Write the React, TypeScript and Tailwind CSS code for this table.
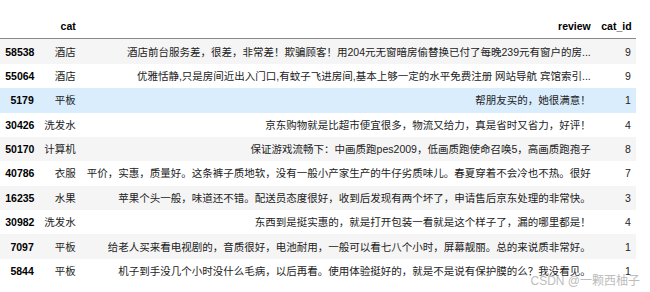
type Row = {
  idx: number;
  cat: string;
  review: string;
  catId: number;
};

const rows: Row[] = [
  { idx: 58538, cat: "酒店", review: "酒店前台服务差，很差，非常差！欺骗顾客！用204元无窗暗房偷替换已付了每晚239元有窗户的房...", catId: 9 },
  { idx: 55064, cat: "酒店", review: "优雅恬静,只是房间近出入门口,有蚊子飞进房间,基本上够一定的水平免费注册 网站导航 宾馆索引...", catId: 9 },
  { idx: 5179, cat: "平板", review: "帮朋友买的，她很满意！", catId: 1 },
  { idx: 30426, cat: "洗发水", review: "京东购物就是比超市便宜很多，物流又给力，真是省时又省力，好评！", catId: 4 },
  { idx: 50170, cat: "计算机", review: "保证游戏流畅下：中画质跑pes2009，低画质跑使命召唤5，高画质跑孢子", catId: 8 },
  { idx: 40786, cat: "衣服", review: "平价，实惠，质量好。这条裤子质地软，没有一般小产家生产的牛仔劣质味儿。春夏穿着不会冷也不热。很好", catId: 7 },
  { idx: 16235, cat: "水果", review: "苹果个头一般，味道还不错。配送员态度很好，收到后发现有两个坏了，申请售后京东处理的非常快。", catId: 3 },
  { idx: 30982, cat: "洗发水", review: "东西到是挺实惠的，就是打开包装一看就是这个样子了，漏的哪里都是！", catId: 4 },
  { idx: 7097, cat: "平板", review: "给老人买来看电视剧的，音质很好，电池耐用，一般可以看七八个小时，屏幕靓丽。总的来说质非常好。", catId: 1 },
  { idx: 5844, cat: "平板", review: "机子到手没几个小时没什么毛病，以后再看。使用体验挺好的，就是不是说有保护膜的么？我没看见。", catId: 1 },
];

const cell = "px-[5.25px] py-[5.2px] text-right align-middle leading-[14px] whitespace-nowrap overflow-hidden";

export default function App() {
  return (
    <div className="relative h-[292px] w-[650px] overflow-hidden bg-white pt-[14px] font-['Liberation_Sans','Noto_Sans_CJK_SC',sans-serif] text-[10.5px] text-[#222]">
      <table className="w-[636px] table-fixed border-collapse">
        <colgroup>
          <col className="w-[39px]" />
          <col className="w-[42px]" />
          <col className="w-[515px]" />
          <col className="w-[40px]" />
        </colgroup>
        <thead className="border-b border-[#888]">
          <tr>
            <th className={`${cell} font-bold text-black`}></th>
            <th className={`${cell} font-bold text-black`}>cat</th>
            <th className={`${cell} font-bold text-black`}>review</th>
            <th className={`${cell} font-bold text-black`}>cat_id</th>
          </tr>
        </thead>
        <tbody>
          {rows.map((r, i) => (
            <tr
              key={r.idx}
              className={i === 2 ? "bg-[#d9edfd]" : i % 2 === 0 ? "bg-[#f5f5f5]" : "bg-white"}
            >
              <th className={`${cell} font-bold text-black`}>{r.idx}</th>
              <td className={cell}>{r.cat}</td>
              <td className={cell}>{r.review}</td>
              <td className={cell}>{r.catId}</td>
            </tr>
          ))}
        </tbody>
      </table>
      <div className="absolute bottom-[4px] right-[10px] text-[12px] leading-[14px] text-[#bdbdbd] [text-shadow:0_0_2px_#fff]">
        CSDN @一颗西柚子
      </div>
    </div>
  );
}
